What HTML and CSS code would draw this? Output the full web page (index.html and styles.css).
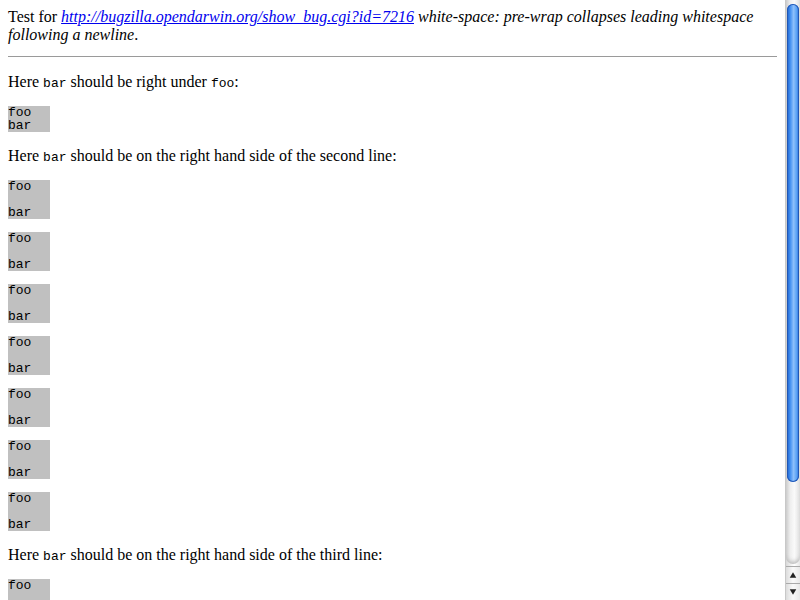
FILE: index.html
```html
<!DOCTYPE html>
<html>
<head>
<meta charset="utf-8">
<link rel="stylesheet" href="styles.css">
</head>
<body>
<div class="page">
<div class="intro">Test for <a href="#">http://bugzilla.opendarwin.org/show_bug.cgi?id=7216</a> <i>white-space: pre-wrap collapses leading whitespace following a newline</i>.</div>
<hr class="rule">
<p class="note">Here <code>bar</code> should be right under <code>foo</code>:</p>
<pre class="box">foo
bar</pre>
<p class="note">Here <code>bar</code> should be on the right hand side of the second line:</p>
<pre class="box">foo

bar</pre>
<pre class="box">foo

bar</pre>
<pre class="box">foo

bar</pre>
<pre class="box">foo

bar</pre>
<pre class="box">foo

bar</pre>
<pre class="box">foo

bar</pre>
<pre class="box">foo

bar</pre>
<p class="note">Here <code>bar</code> should be on the right hand side of the third line:</p>
<pre class="box">foo


bar</pre>
</div>
<div class="scrollbar">
  <div class="track">
    <div class="thumb"></div>
  </div>
  <div class="arrow up"><svg width="15" height="16" viewBox="0 0 15 16"><path d="M4 11 L7.5 5 L11 11 Z" fill="#222"/></svg></div>
  <div class="arrow down"><svg width="15" height="16" viewBox="0 0 15 16"><path d="M4 5 L7.5 11 L11 5 Z" fill="#222"/></svg></div>
</div>
</body>
</html>
```
FILE: styles.css
```css
html {
  overflow: hidden;
  background: #fff;
}
body {
  margin: 0;
  font-family: "Liberation Serif", "Times New Roman", serif;
  font-size: 16px;
  color: #000;
}
.page {
  padding: 8px 23px 8px 8px;
}
.intro {
  line-height: 18px;
}
.intro a {
  color: #0000ee;
  font-style: italic;
}
.rule {
  margin: 12px 0 16px 0;
  border: 0;
  border-top: 1px solid #9a9a9a;
  height: 0;
}
.note {
  margin: 15px 0 15px 0;
  line-height: 18px;
}
code {
  font-family: "Liberation Mono", "Courier New", monospace;
  font-size: 13px;
  line-height: 13px;
}
.box {
  width: 42px;
  background: #c0c0c0;
  font-family: "Liberation Mono", "Courier New", monospace;
  font-size: 13px;
  line-height: 13px;
  margin: 13px 0;
  white-space: pre;
}
.scrollbar {
  position: fixed;
  top: 0;
  right: 0;
  width: 15px;
  height: 600px;
  display: flex;
  flex-direction: column;
  background: linear-gradient(to right, #d8d8d8, #f4f4f4 40%, #ffffff 60%, #e6e6e6);
  border-left: 1px solid #c8c8c8;
  box-sizing: border-box;
}
.track {
  flex: 1;
  padding: 4px 1px 0 1px;
  border-bottom-left-radius: 7px;
  border-bottom-right-radius: 7px;
  background: linear-gradient(to right, #cfcfcf, #eeeeee 30%, #fafafa 60%, #e0e0e0);
  box-shadow: inset 0 -4px 4px -2px #bbb;
  margin-bottom: 2px;
}
.thumb {
  height: 478px;
  border-radius: 7px;
  background: linear-gradient(to right, #1f5fc8, #3d8cf0 25%, #8ec0fb 55%, #5aa2f5 80%, #2a6cd6);
  box-shadow: inset 0 0 0 1px #2257b5;
}
.arrow {
  height: 16px;
  border-top: 1px solid #aaa;
  background: linear-gradient(to right, #dcdcdc, #fafafa 50%, #e8e8e8);
  display: flex;
  align-items: center;
  justify-content: center;
}
.arrow svg {
  display: block;
}
```
